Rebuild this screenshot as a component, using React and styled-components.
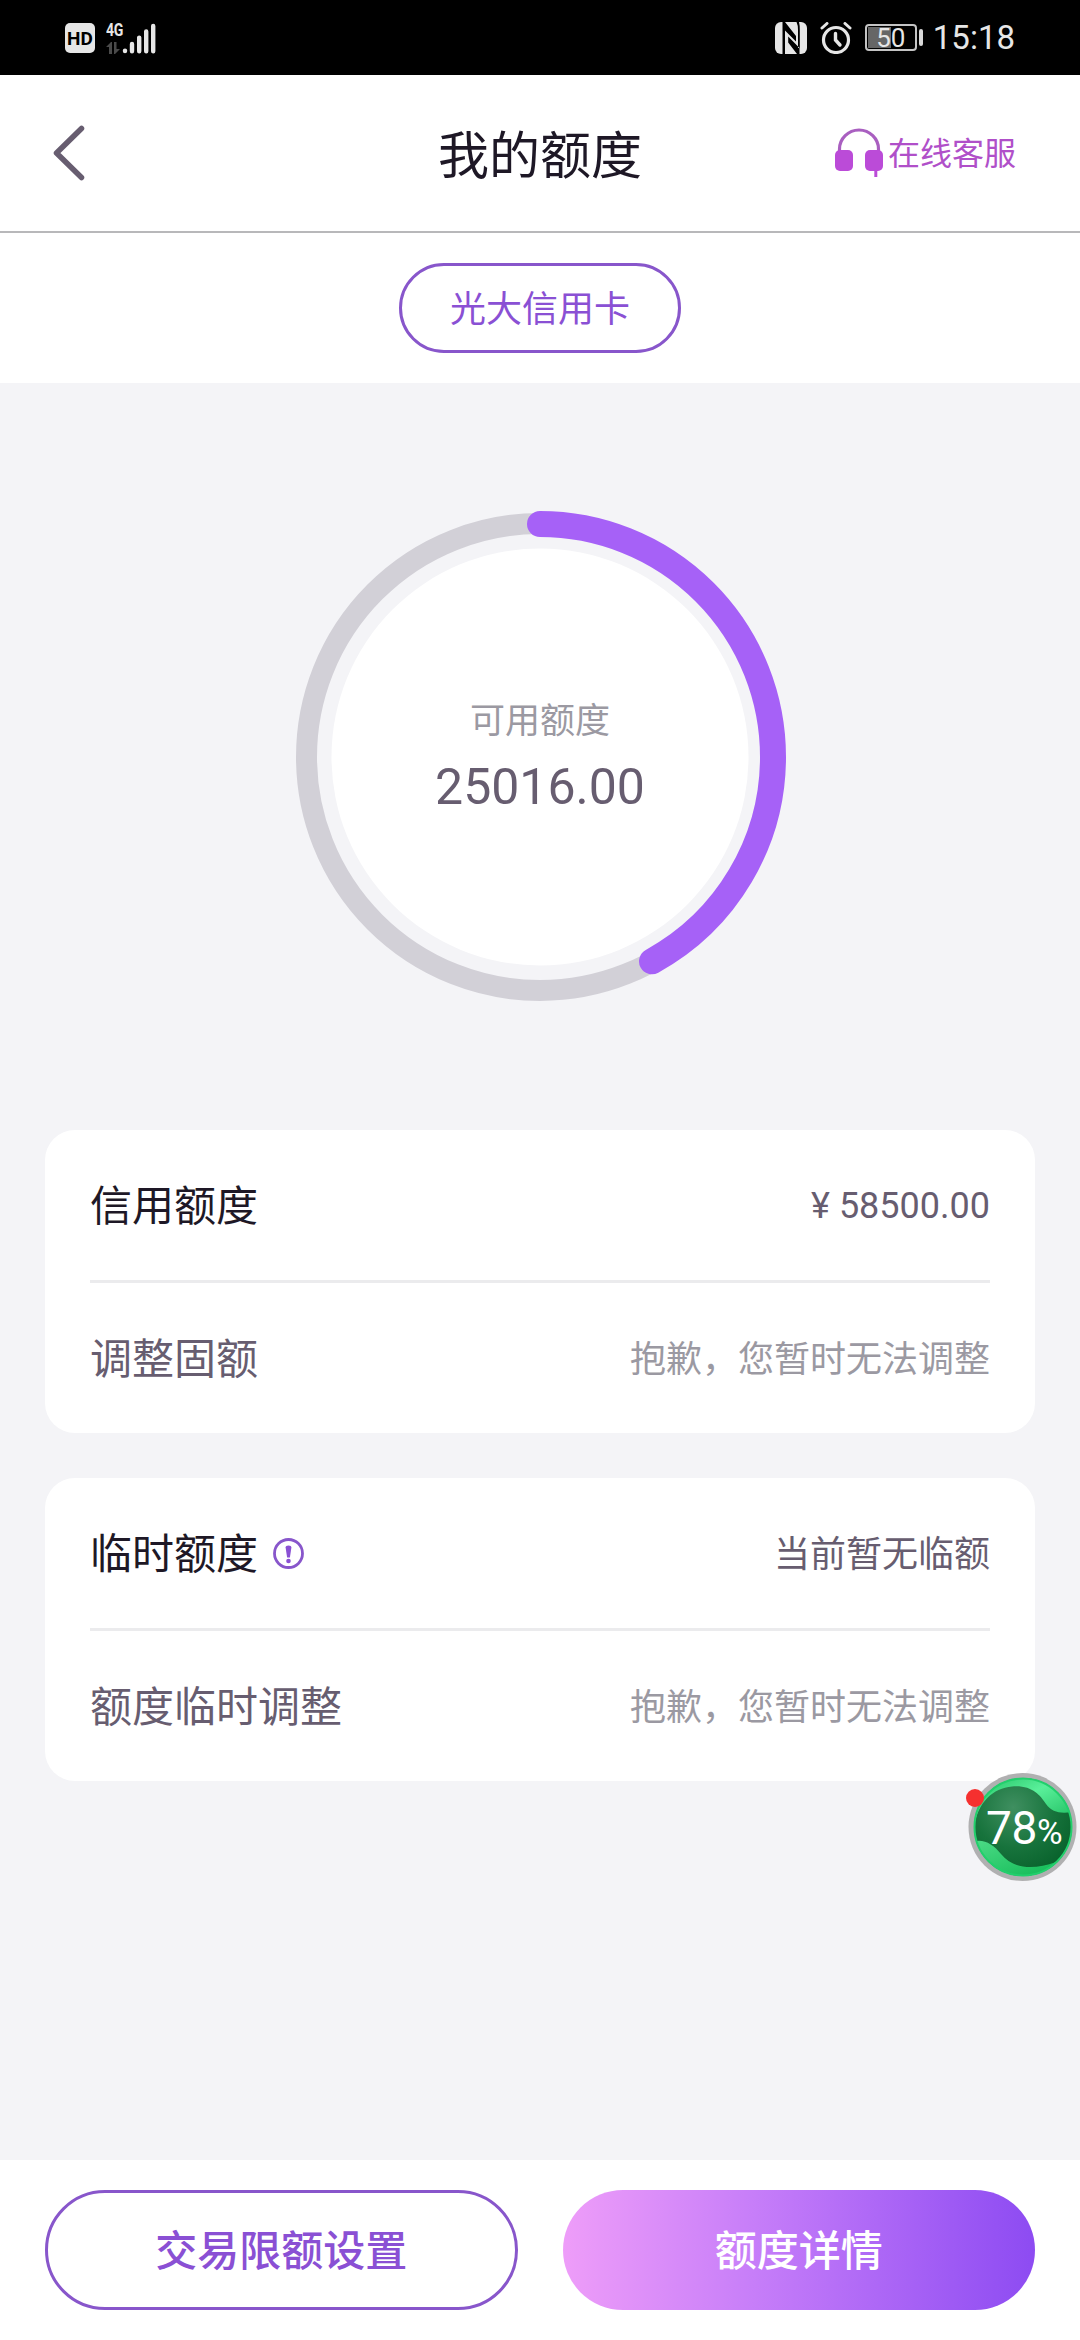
import React, { Component } from 'react';
import styled, { css, createGlobalStyle } from 'styled-components';

const GlobalStyle = createGlobalStyle`
  body {
    margin: 0;
    background: #f4f4f7;
    font-family: "Noto Sans CJK SC", "Noto Sans", sans-serif;
  }
  * {
    box-sizing: border-box;
  }
`;

const Page = styled.div`
  width: 1080px;
  height: 2340px;
  display: flex;
  flex-direction: column;
  overflow: hidden;
  background: #f4f4f7;
`;

const StatusBar = styled.div`
  height: 75px;
  display: flex;
  justify-content: space-between;
  padding: 0 65px;
  background: #000;
  color: #e6e6e6;
  font-family: Roboto, sans-serif;
`;

const StatusGroup = styled.div`
  display: flex;
  align-items: center;
`;

const HdBadge = styled.div`
  width: 30px;
  height: 30px;
  margin-right: 11px;
  border-radius: 5px;
  background: #e6e6e6;
  color: #000;
  font-size: 19px;
  font-weight: 700;
  line-height: 31px;
  text-align: center;
`;

const Network = styled.div`
  width: 16px;
  height: 32px;
  font-family: "Roboto", sans-serif;
  font-size: 18px;
  font-weight: 700;
  line-height: 16px;
  letter-spacing: -0.5px;
  display: flex;
  flex-direction: column;
  justify-content: space-between;

  span {
    transform: scaleX(0.78);
    transform-origin: left;
  }
`;

const Signal = styled.svg`
  width: 34px;
  height: 32px;
`;

const StatusIcon = styled.svg`
  width: 32px;
  height: 32px;
  margin-right: 13px;
`;

const Battery = styled.div`
  width: 52px;
  height: 27px;
  border: 2px solid #c4c4c4;
  border-radius: 4px;
  padding: 1px;
`;

const BatteryLevel = styled.div`
  height: 100%;
  background: linear-gradient(to right, #666 50%, #000 50%);
  color: #e6e6e6;
  font-size: 26px;
  line-height: 22px;
  text-align: center;
`;

const BatteryTip = styled.div`
  width: 4px;
  height: 17px;
  margin: 0 10px 0 2px;
  border-radius: 2px;
  background: #d8d8d8;
`;

const Clock = styled.div`
  font-size: 33px;
  line-height: 40px;
  padding-top: 1px;
`;

const Header = styled.div`
  height: 158px;
  display: grid;
  grid-template-columns: 1fr auto 1fr;
  align-items: center;
  padding: 0 64px 0 50px;
  border-bottom: 2px solid #b8b8ba;
  background: #fff;
`;

const BackIcon = styled.svg`
  width: 38px;
  height: 60px;
`;

const Title = styled.h1`
  margin: 0;
  padding: 0 0 3px 14px;
  font-size: 51px;
  font-weight: 400;
  line-height: 60px;
  color: #1e1826;
`;

const Service = styled.div`
  display: flex;
  align-items: center;
  justify-content: flex-end;
  font-size: 32px;
  line-height: 40px;
  color: #b04fc9;

  span {
    padding-bottom: 4px;
  }
`;

const ServiceIcon = styled.svg`
  width: 50px;
  height: 50px;
  margin-right: 4px;
`;

const Tabs = styled.div`
  height: 150px;
  display: flex;
  align-items: center;
  justify-content: center;
  background: #fff;
`;

const Tab = styled.div`
  height: 90px;
  padding: 0 48px;
  border: 3px solid #8856cb;
  border-radius: 45px;
  font-size: 36px;
  line-height: 80px;
  color: #8a50d4;
`;

const Gauge = styled.div`
  height: 747px;
  display: grid;
  justify-items: center;
  align-items: center;

  > * {
    grid-area: 1 / 1;
  }
`;

const Ring = styled.svg`
  width: 500px;
  height: 500px;
`;

const GaugeText = styled.div`
  display: flex;
  flex-direction: column;
  align-items: center;
  padding-bottom: 4px;
`;

const GaugeLabel = styled.div`
  font-size: 35px;
  line-height: 50px;
  color: #9b99a2;
`;

const GaugeValue = styled.div`
  margin-top: 14px;
  font-family: Roboto, sans-serif;
  font-size: 50px;
  line-height: 60px;
  color: #675d70;
`;

const Cards = styled.div`
  flex: 1;
  display: flex;
  flex-direction: column;
  gap: 45px;
  padding: 0 45px;
`;

const Card = styled.div`
  padding: 0 45px;
  border-radius: 30px;
  background: #fff;
`;

const Row = styled.div`
  height: 150px;
  display: flex;
  align-items: center;
  justify-content: space-between;

  & + & {
    height: 153px;
    border-top: 3px solid #ebebed;
  }
`;

const RowLabel = styled.div`
  display: flex;
  align-items: center;
  gap: 15px;
  font-size: 42px;
  line-height: 60px;
  color: ${ props => props.$dark ? '#1e1826' : '#675d70' };

  span {
    padding-bottom: 4px;
  }
`;

const RowValue = styled.div`
  padding-bottom: 4px;
  font-size: 36px;
  line-height: 50px;
  color: ${ props => props.$muted ? '#9b99a2' : '#675d70' };
  ${ props => props.$amount && css`
    padding: 2px 0 0;
    font-family: Roboto, sans-serif;
  `}
`;

const InfoIcon = styled.svg`
  width: 31px;
  height: 31px;
`;

const Footer = styled.div`
  height: 180px;
  display: grid;
  grid-template-columns: 1fr 1fr;
  align-items: center;
  gap: 45px;
  padding: 0 45px;
  background: #fff;
`;

const Button = styled.button`
  height: 120px;
  padding: 0 0 5px;
  border: 3px solid #8856cb;
  border-radius: 60px;
  background: #fff;
  color: #8a50d4;
  font-family: inherit;
  font-size: 42px;
  font-weight: 500;
  ${ props => props.$primary && css`
    border: none;
    background: linear-gradient(to right, #ee9df9, #c77ef9 40%, #8d4bf2);
    color: #fff;
  `}
`;

const FloatBall = styled.div`
  position: absolute;
  left: 966px;
  top: 1772px;
  width: 112px;
  height: 112px;
`;

const BallShape = styled.svg`
  display: block;
  width: 112px;
  height: 112px;
`;

const BallText = styled.div`
  position: absolute;
  left: 20px;
  top: 28px;
  font-family: Roboto, sans-serif;
  font-size: 46px;
  line-height: 56px;
  letter-spacing: -0.3px;
  color: #fff;
  white-space: nowrap;

  small {
    font-size: 35px;
  }
`;

const RADIUS = 233;

class App extends Component {

  state = {
    available: '25016.00',
    percent: 42,
    cards: [
      [
        { label: '信用额度', value: '¥ 58500.00', dark: true, amount: true },
        { label: '调整固额', value: '抱歉，您暂时无法调整', muted: true }
      ],
      [
        { label: '临时额度', value: '当前暂无临额', dark: true, info: true },
        { label: '额度临时调整', value: '抱歉，您暂时无法调整', muted: true }
      ]
    ]
  };

  renderStatus() {
    return (
      <StatusBar>
        <StatusGroup>
          <HdBadge>HD</HdBadge>
          <Network>
            <span>4G</span>
            <svg width="16" height="12" viewBox="0 0 16 12" fill="#4a4a4a">
              <path d="M0 5L5 0h1v12H3V5zM8 0h2.5v7H14l-5 5H8z"/>
            </svg>
          </Network>
          <Signal viewBox="0 0 34 32" stroke="#e6e6e6" strokeWidth="4.4" strokeLinecap="round">
            <path d="M3 28.6v0.5M10 22v7.3M17.2 15.6v13.7M24.2 9.4v19.9M31.2 4v25.3"/>
          </Signal>
        </StatusGroup>
        <StatusGroup>
          <StatusIcon viewBox="0 0 32 32">
            <rect width="32" height="32" rx="6" fill="#e6e6e6"/>
            <path d="M7.500 0H10L21 14V19.500L10 8.500V32H7.500zM13.200 14.500L24.500 26V32H22L13.200 20.500zM21.500 0Q23 3 23 8V26H24.800V8Q24.800 3 24 0z" fill="#000"/>
          </StatusIcon>
          <StatusIcon viewBox="0 0 32 32" fill="none" stroke="#e6e6e6" strokeLinecap="round">
            <circle cx="16" cy="18" r="12.500" strokeWidth="3.200"/>
            <path d="M15.500 11.500V18l4.500 5" strokeWidth="3.400"/>
            <path d="M2 6l5-4.500M25 1.500L30 6" strokeWidth="3"/>
          </StatusIcon>
          <Battery>
            <BatteryLevel>50</BatteryLevel>
          </Battery>
          <BatteryTip/>
          <Clock>15:18</Clock>
        </StatusGroup>
      </StatusBar>
    );
  }

  renderBall() {
    return (
      <FloatBall>
        <BallShape viewBox="0 0 112 112">
          <defs>
            <radialGradient id="deep" cx="0.4" cy="0.3" r="0.75">
              <stop offset="0" stopColor="#3f8f60"/>
              <stop offset="0.55" stopColor="#17733c"/>
              <stop offset="1" stopColor="#07602a"/>
            </radialGradient>
            <linearGradient id="top" x1="0" y1="0" x2="1" y2="1">
              <stop offset="0" stopColor="#12b556"/>
              <stop offset="0.5" stopColor="#5af09a"/>
              <stop offset="1" stopColor="#19b85b"/>
            </linearGradient>
            <linearGradient id="low" x1="0" y1="0" x2="1" y2="1">
              <stop offset="0" stopColor="#4fdc88"/>
              <stop offset="1" stopColor="#04b34b"/>
            </linearGradient>
            <clipPath id="ball">
              <circle cx="57" cy="55" r="49"/>
            </clipPath>
          </defs>
          <circle cx="56.500" cy="55" r="54" fill="#b0b0b1"/>
          <circle cx="57" cy="55" r="49" fill="url(#deep)"/>
          <g clipPath="url(#ball)">
            <path d="M8 55C12 30 27 16 46 14.500C66 13 74 23 80 32C86 40 94 42 106 40V0H0V55z" fill="url(#top)"/>
            <path d="M6 70C17 66 27 72 35 82C46 96 66 99 90 90L106 75V112H0z" fill="url(#low)"/>
          </g>
          <circle cx="57" cy="55" r="48.500" fill="none" stroke="#22cf6c" strokeWidth="2"/>
          <circle cx="9" cy="26" r="9" fill="#f5302f"/>
        </BallShape>
        <BallText>78<small>%</small></BallText>
      </FloatBall>
    );
  }

  render() {
    const length = 2 * Math.PI * RADIUS;
    return (
      <Page>
        <GlobalStyle/>
        {this.renderStatus()}
        <Header>
          <BackIcon viewBox="0 0 38 60">
            <path d="M31.500 5.500L6.500 30L31.500 54.500" fill="none" stroke="#675d70" strokeWidth="5.500"
                  strokeLinecap="round" strokeLinejoin="round"/>
          </BackIcon>
          <Title>我的额度</Title>
          <Service>
            <ServiceIcon viewBox="0 0 50 50">
              <path d="M5.500 24V21A19.500 19 0 0 1 44.500 21V24" fill="none" stroke="#a95fc0" strokeWidth="3.200"/>
              <rect x="1" y="22" width="18" height="21" rx="5" fill="#bb4bd8"/>
              <rect x="31" y="22" width="18" height="21" rx="5" fill="#bb4bd8"/>
              <path d="M41.800 42v7" stroke="#bb4bd8" strokeWidth="3"/>
            </ServiceIcon>
            <span>在线客服</span>
          </Service>
        </Header>
        <Tabs>
          <Tab>光大信用卡</Tab>
        </Tabs>
        <Gauge>
          <Ring viewBox="0 0 500 500" fill="none">
            <circle cx="250" cy="250" r="208.500" fill="#fff"/>
            <circle cx="250" cy="250" r={ RADIUS + 0.5 } stroke="#d2d0d7" strokeWidth="21"/>
            <circle cx="250" cy="250" r={ RADIUS } stroke="#a661f7" strokeWidth="26" strokeLinecap="round"
                    strokeDasharray={ `${length * this.state.percent / 100} ${length}` }
                    transform="rotate(-90 250 250)"/>
          </Ring>
          <GaugeText>
            <GaugeLabel>可用额度</GaugeLabel>
            <GaugeValue>{ this.state.available }</GaugeValue>
          </GaugeText>
        </Gauge>
        <Cards>
          { this.state.cards.map((rows, i) => (
            <Card key={ i }>
              { rows.map(row => (
                <Row key={ row.label }>
                  <RowLabel $dark={ row.dark }>
                    <span>{ row.label }</span>
                    { row.info &&
                    <InfoIcon viewBox="0 0 31 31">
                      <circle cx="15.500" cy="15.500" r="14" fill="none" stroke="#8856cb" strokeWidth="2.800"/>
                      <path d="M12.600 9.500Q12.600 7.500 15.500 7.500T18.400 9.500L16.900 19.500H14.100z" fill="#8a50d4"/>
                      <circle cx="15.500" cy="23" r="2.300" fill="#8a50d4"/>
                    </InfoIcon> }
                  </RowLabel>
                  <RowValue $muted={ row.muted } $amount={ row.amount }>{ row.value }</RowValue>
                </Row>
              )) }
            </Card>
          )) }
        </Cards>
        <Footer>
          <Button>交易限额设置</Button>
          <Button $primary>额度详情</Button>
        </Footer>
        {this.renderBall()}
      </Page>
    );
  }
}

export default App;
